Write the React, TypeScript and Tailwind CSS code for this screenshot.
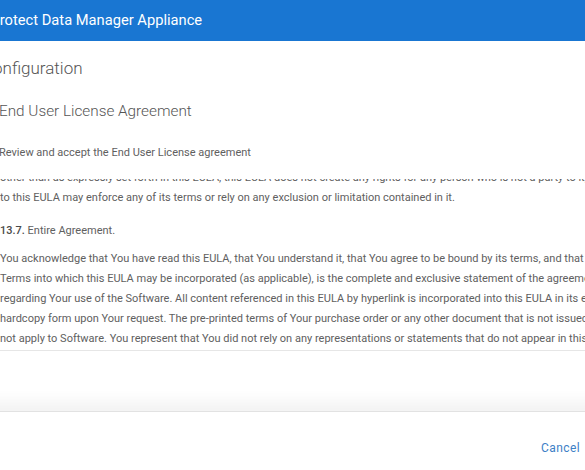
import React from "react"

const firstPara = [
  "other than as expressly set forth in this EULA, this EULA does not create any rights for any person who is not a party to it, and no person who is not a party",
  "to this EULA may enforce any of its terms or rely on any exclusion or limitation contained in it.",
]

const lastPara = [
  "You acknowledge that You have read this EULA, that You understand it, that You agree to be bound by its terms, and that this EULA, together with the",
  "Terms into which this EULA may be incorporated (as applicable), is the complete and exclusive statement of the agreement between You and Dell",
  "regarding Your use of the Software. All content referenced in this EULA by hyperlink is incorporated into this EULA in its entirety and is available in",
  "hardcopy form upon Your request. The pre-printed terms of Your purchase order or any other document that is not issued by Dell do",
  "not apply to Software. You represent that You did not rely on any representations or statements that do not appear in this EULA.",
]

function App() {
  return (
    <div className="w-[585px] h-[470px] overflow-hidden bg-white font-['Roboto',sans-serif]">
      <div className="-ml-[24px] w-[660px] h-full flex flex-col">
        {/* Header */}
        <header className="h-[41px] shrink-0 bg-[#1976d2] flex items-center pl-[14.5px]">
          <span className="text-white text-[14.7px] leading-none">Protect Data Manager Appliance</span>
        </header>

        {/* Main */}
        <main className="flex-1 flex flex-col pl-[6px] pt-[15px] min-h-0">
          <h1 className="text-[17px] leading-[24px] font-light text-[#555]">Configuration</h1>

          <div className="pl-[17px] mt-[21px] flex flex-col min-h-0">
            <h2 className="text-[15.3px] leading-[20px] font-light text-[#555]">End User License Agreement</h2>
            <p className="mt-[24px] text-[11px] leading-[16px] text-[#5f5f5f]">
              Review and accept the End User License agreement
            </p>

            {/* EULA scroll box */}
            <div className="mt-[18px] h-[172px] overflow-hidden border-b border-[#e6e6e6] pl-[1px]">
              <div className="-mt-[11px] text-[11px] leading-[20px] text-[#606060] whitespace-nowrap">
                <p>
                  {firstPara.map((l, i) => (
                    <span key={i} className="block">{l}</span>
                  ))}
                </p>
                <p className="mt-[13px]">
                  <span className="font-medium text-[#4a4a4a]">13.7.</span> Entire Agreement.
                </p>
                <p className="mt-[8px]">
                  {lastPara.map((l, i) => (
                    <span key={i} className="block">{l}</span>
                  ))}
                </p>
              </div>
            </div>
          </div>

          <div className="flex-1" />
        </main>

        {/* Footer */}
        <footer className="h-[59px] shrink-0 bg-white border-t border-[#e2e2e2] shadow-[0_-10px_14px_rgba(0,0,0,0.05)] flex items-start justify-end pt-[28px] pr-[56px]">
          <button className="text-[12px] leading-[16px] text-[#3d80c6] tracking-[0.4px]">Cancel</button>
        </footer>
      </div>
    </div>
  )
}

export default App
